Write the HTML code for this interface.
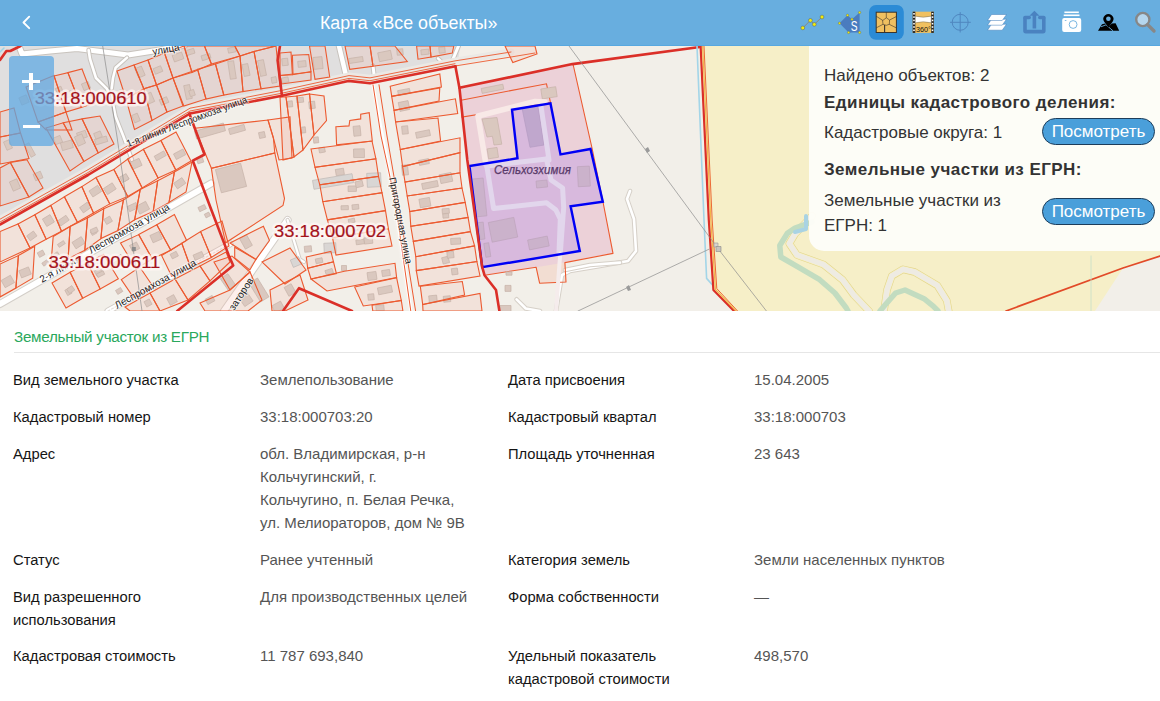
<!DOCTYPE html>
<html><head><meta charset="utf-8">
<style>
*{margin:0;padding:0;box-sizing:border-box}
html,body{width:1160px;height:701px;overflow:hidden;background:#fff;font-family:"Liberation Sans",sans-serif}
#hdr{position:absolute;left:0;top:0;width:1160px;height:46px;background:#68aedf;border-bottom:1px solid #57a8e0}
#title{position:absolute;left:320px;top:11.8px;font-size:17.8px;transform:scaleY(1.06);transform-origin:0 0;color:#fff;white-space:nowrap}
#map{position:absolute;left:0;top:46px;width:1160px;height:265px;overflow:hidden;background:#f2efe9}
#map svg{position:absolute;left:0;top:0}
#zoom{position:absolute;left:9px;top:56px;width:45px;height:90px;background:rgba(95,168,226,0.74);border-radius:4px}
#popup{position:absolute;left:809px;top:46px;width:351px;height:205px;background:rgba(253,253,248,0.97);border-bottom-left-radius:15px}
.pt{position:absolute;left:15px;font-size:17px;color:#333;white-space:nowrap}
.pb{font-weight:bold;letter-spacing:0.45px;color:#333}
.btn{position:absolute;left:233px;width:113px;height:27px;border-radius:14px;background:#4a9fda;border:1px solid #1d3d5a;color:#fff;font-size:17px;text-align:center;line-height:26px}
#info{position:absolute;left:0;top:311px;width:1160px;height:390px;background:#fff}
#etitle{position:absolute;left:14px;top:16.5px;font-size:15.2px;letter-spacing:-0.25px;color:#2aa85c;white-space:nowrap}
#divl{position:absolute;left:14px;top:41px;width:1146px;height:1px;background:#e6e6e6}
.l,.v{position:absolute;font-size:15px;line-height:22.7px;white-space:nowrap}
.l{color:#151515;font-size:14.75px !important}
.v{color:#555}
</style></head><body>
<div id="hdr">
<svg style="position:absolute;left:0;top:0" width="1160" height="46" viewBox="0 0 1160 46">
<path d="M29.2 16.7 L23.5 22.5 L29.2 28.2" fill="none" stroke="#fff" stroke-width="1.9" stroke-linecap="round" stroke-linejoin="round"/>
<!-- icon1 polyline -->
<polyline points="802.8,27.9 810.4,20.4 814.3,24.4 822,17" fill="none" stroke="#8a8a80" stroke-width="1"/>
<g fill="#f3ec0a" stroke="#4a5a7a" stroke-width="0.5">
<circle cx="802.8" cy="27.9" r="1.9"/><circle cx="810.4" cy="20.4" r="1.9"/><circle cx="814.3" cy="24.4" r="1.9"/><circle cx="822" cy="17" r="1.9"/>
</g>
<!-- icon2 polygon S -->
<polygon points="859.6,12.5 852,19.2 847.5,15.3 839.5,23.2 848.6,32.5 859.6,32.5" fill="#4a7cbf"/>
<text x="850.8" y="31" font-family="Liberation Sans" font-size="14" fill="#fff" textLength="6.8" lengthAdjust="spacingAndGlyphs">S</text>
<g fill="#f3ec0a" stroke="#4a5a7a" stroke-width="0.4">
<circle cx="859.6" cy="12.5" r="1.2"/><circle cx="847.5" cy="15.3" r="1.2"/><circle cx="852" cy="19.2" r="1.2"/><circle cx="839.5" cy="23.2" r="1.2"/><circle cx="848.6" cy="32.5" r="1.2"/><circle cx="859.6" cy="32.5" r="1.2"/>
</g>
<!-- icon3 selected chip -->
<rect x="869" y="4.9" width="34.8" height="34.9" rx="7" fill="#2b8bd6"/>
<rect x="876.2" y="12.2" width="20.2" height="20.3" fill="#f0c060" stroke="#3a342c" stroke-width="1"/>
<g stroke="#3a342c" stroke-width="0.6" fill="none">
<path d="M886.3 12.2 V17.8 M876.2 16.2 L883 20.6 M896.4 16.5 L889.6 20 M876.2 27.9 L883 24.3 M896.4 27.9 L889.2 24.3"/>
<path d="M886.3 17.8 L889.6 20 L889.3 24.3 L886.3 25.3 L883 24.3 L882.6 20.6 Z"/>
</g>
<path d="M884.6 25 V32.5" stroke="#3a342c" stroke-width="1.1"/>
<!-- icon4 filmstrip -->
<rect x="912.7" y="11.7" width="21.1" height="21.2" fill="#f0c060"/>
<rect x="912.7" y="11.7" width="2.6" height="21.2" fill="#222"/>
<rect x="931.2" y="11.7" width="2.6" height="21.2" fill="#222"/>
<g fill="#fff"><rect x="913.2" y="13" width="1.6" height="1.6"/><rect x="913.2" y="16.3" width="1.6" height="1.6"/><rect x="913.2" y="19.6" width="1.6" height="1.6"/><rect x="913.2" y="22.9" width="1.6" height="1.6"/><rect x="913.2" y="26.2" width="1.6" height="1.6"/><rect x="913.2" y="29.5" width="1.6" height="1.6"/>
<rect x="931.7" y="13" width="1.6" height="1.6"/><rect x="931.7" y="16.3" width="1.6" height="1.6"/><rect x="931.7" y="19.6" width="1.6" height="1.6"/><rect x="931.7" y="22.9" width="1.6" height="1.6"/><rect x="931.7" y="26.2" width="1.6" height="1.6"/><rect x="931.7" y="29.5" width="1.6" height="1.6"/></g>
<path d="M915.3 16.2 Q923.2 18.2 931.2 16.2 V22.8 Q923.2 20.8 915.3 22.8 Z" fill="#fff" stroke="#555" stroke-width="0.4"/>
<text x="916" y="31.8" font-family="Liberation Sans" font-size="7.2" fill="#111" textLength="15" lengthAdjust="spacingAndGlyphs">360°</text>
<!-- icon5 crosshair -->
<g stroke="#4f86bf" stroke-width="1" fill="none"><circle cx="960.2" cy="22.3" r="8"/><path d="M950 22.3 H970.8 M960.2 12.1 V32.5"/></g>
<!-- icon6 layers -->
<g fill="#fff" stroke="#3f7ab8" stroke-width="0.5">
<polygon points="987.5,30.2 1002.2,30.2 1006.5,24.2 991.5,24.2"/>
<polygon points="987.5,25.2 1002.2,25.2 1006.5,19.2 991.5,19.2"/>
<polygon points="987.5,20.5 1002.2,20.5 1006.5,14.5 991.5,14.5"/>
</g>
<!-- icon7 share -->
<path d="M1025 17.5 V30.8 Q1025 31.6 1025.8 31.6 H1043 Q1043.8 31.6 1043.8 30.8 V17.5" fill="none" stroke="#4a82c0" stroke-width="3.6" stroke-linejoin="round"/>
<path d="M1025 17.5 H1029.2 M1039.8 17.5 H1043.8" stroke="#4a82c0" stroke-width="3.6" stroke-linecap="round"/>
<rect x="1032.6" y="14.5" width="3.6" height="14" fill="#4a82c0"/>
<polygon points="1029.4,15.8 1034.4,10.8 1039.5,15.8" fill="#4a82c0"/>
<!-- icon8 camera -->
<rect x="1062.2" y="18.1" width="19" height="14" rx="2" fill="#fff"/>
<rect x="1064.4" y="11.5" width="14.4" height="1.6" fill="#fff"/>
<rect x="1063.7" y="14.5" width="15.8" height="1.6" fill="#fff"/>
<circle cx="1073.1" cy="24.5" r="3.9" fill="#fff" stroke="#6aaede" stroke-width="0.9"/>
<rect x="1064.8" y="20.2" width="1.6" height="0.8" fill="#6aaede"/>
<!-- icon9 map pin -->
<path d="M1098 30.8 L1102 24.2 L1105 23.6 L1108.4 27 L1111.8 23.6 L1115.6 23.2 L1119.2 30.8 Z" fill="#000"/>
<path d="M1101 26.8 L1106 24.8 L1113 30.8" fill="none" stroke="#6aaede" stroke-width="0.9"/>
<path d="M1108.4 27.5 L1104.2 21.8 A5 5 0 1 1 1112.6 21.8 Z" fill="#000"/>
<circle cx="1108.4" cy="18.7" r="2.3" fill="#6aaede"/>
<!-- icon10 search -->
<circle cx="1142.8" cy="19.5" r="6.6" fill="#b5d6ee" stroke="#878787" stroke-width="2.4"/>
<path d="M1147.6 24.6 L1154 31" stroke="#878787" stroke-width="3.4" stroke-linecap="round"/>
</svg>
<div id="title">Карта «Все объекты»</div>
</div>
<div id="map">
<svg width="1160" height="265" viewBox="0 46 1160 265">
<!-- MAP -->
<rect x="0" y="46" width="1160" height="265" fill="#f2efe9"/>
<polygon points="0.0,46.0 460.0,46.0 458.0,64.0 390.0,77.0 349.0,79.0 282.0,93.0 190.0,112.0 0.0,220.0" fill="#e0dfdf" stroke="none" stroke-width="1" />
<polygon points="701.0,46.0 1160.0,46.0 1160.0,311.0 734.0,311.0 712.0,289.0 706.0,175.0" fill="#f6efc8" stroke="none" stroke-width="1" />
<polygon points="1095.0,311.0 1123.0,268.0 1160.0,256.0 1160.0,311.0" fill="#f2efe9" stroke="none" stroke-width="1" />
<polygon points="459.0,88.0 573.0,64.0 592.0,148.0 603.0,202.0 613.0,253.0 565.0,262.0 566.0,282.0 540.0,283.0 536.0,267.0 484.0,275.0 469.0,166.0" fill="#ecd1d8" stroke="none" stroke-width="1" />
<polygon points="536.1,267.2 564.9,262.6 566.0,282.0 539.6,283.2" fill="#f2ddd2" stroke="none" stroke-width="1" />
<polyline points="19.0,46.0 22.0,54.0 50.0,51.0 77.0,48.6 128.0,55.0 160.0,50.0 185.0,45.0" fill="none" stroke="#c8c3bd" stroke-width="7.0" stroke-linejoin="round" stroke-linecap="round" />
<polyline points="19.0,46.0 22.0,54.0 50.0,51.0 77.0,48.6 128.0,55.0 160.0,50.0 185.0,45.0" fill="none" stroke="#ffffff" stroke-width="5" stroke-linejoin="round" stroke-linecap="round" />
<polyline points="88.6,50.0 90.0,59.0 96.0,78.0 106.6,88.4 111.7,97.4 115.6,116.6 123.3,136.0 132.0,160.0" fill="none" stroke="#c8c3bd" stroke-width="4.6" stroke-linejoin="round" stroke-linecap="round" />
<polyline points="88.6,50.0 90.0,59.0 96.0,78.0 106.6,88.4 111.7,97.4 115.6,116.6 123.3,136.0 132.0,160.0" fill="none" stroke="#ffffff" stroke-width="2.6" stroke-linejoin="round" stroke-linecap="round" />
<polyline points="127.0,57.6 115.6,67.8 113.0,78.0 111.7,88.4" fill="none" stroke="#c8c3bd" stroke-width="4.6" stroke-linejoin="round" stroke-linecap="round" />
<polyline points="127.0,57.6 115.6,67.8 113.0,78.0 111.7,88.4" fill="none" stroke="#ffffff" stroke-width="2.6" stroke-linejoin="round" stroke-linecap="round" />
<polyline points="339.0,46.0 346.7,78.6" fill="none" stroke="#c8c3bd" stroke-width="6.5" stroke-linejoin="round" stroke-linecap="round" />
<polyline points="339.0,46.0 346.7,78.6" fill="none" stroke="#ffffff" stroke-width="4.5" stroke-linejoin="round" stroke-linecap="round" />
<polyline points="373.0,66.0 374.7,80.0" fill="none" stroke="#c8c3bd" stroke-width="5.0" stroke-linejoin="round" stroke-linecap="round" />
<polyline points="373.0,66.0 374.7,80.0" fill="none" stroke="#ffffff" stroke-width="3" stroke-linejoin="round" stroke-linecap="round" />
<polyline points="458.5,46.0 450.7,64.6" fill="none" stroke="#c8c3bd" stroke-width="5.0" stroke-linejoin="round" stroke-linecap="round" />
<polyline points="458.5,46.0 450.7,64.6" fill="none" stroke="#ffffff" stroke-width="3" stroke-linejoin="round" stroke-linecap="round" />
<polyline points="438.0,58.4 444.5,64.6" fill="none" stroke="#c8c3bd" stroke-width="4.5" stroke-linejoin="round" stroke-linecap="round" />
<polyline points="438.0,58.4 444.5,64.6" fill="none" stroke="#ffffff" stroke-width="2.5" stroke-linejoin="round" stroke-linecap="round" />
<polyline points="0.0,219.5 88.0,170.0 190.0,108.5 282.0,90.7 349.0,75.9 370.0,78.2 455.0,61.2 511.0,52.0" fill="none" stroke="#ebe9e5" stroke-width="7" stroke-linejoin="round" stroke-linecap="round" />
<polyline points="0.0,304.0 211.0,183.5" fill="none" stroke="#d3cec8" stroke-width="8.0" stroke-linejoin="round" stroke-linecap="round" />
<polyline points="0.0,304.0 211.0,183.5" fill="none" stroke="#ffffff" stroke-width="6" stroke-linejoin="round" stroke-linecap="round" />
<polyline points="108.0,311.0 150.0,288.0 230.0,244.0" fill="none" stroke="#d3cec8" stroke-width="7.0" stroke-linejoin="round" stroke-linecap="round" />
<polyline points="108.0,311.0 150.0,288.0 230.0,244.0" fill="none" stroke="#ffffff" stroke-width="5" stroke-linejoin="round" stroke-linecap="round" />
<polyline points="108.0,311.0 150.0,288.0 230.0,244.0" fill="none" stroke="#e6e1dc" stroke-width="1.2" stroke-linejoin="round" stroke-linecap="round" stroke-dasharray="2 2"/>
<polyline points="287.6,220.0 224.0,311.0" fill="none" stroke="#d3cec8" stroke-width="8.0" stroke-linejoin="round" stroke-linecap="round" />
<polyline points="287.6,220.0 224.0,311.0" fill="none" stroke="#ffffff" stroke-width="6" stroke-linejoin="round" stroke-linecap="round" />
<polyline points="287.6,220.0 299.7,259.4 304.0,262.0" fill="none" stroke="#d3cec8" stroke-width="4.2" stroke-linejoin="round" stroke-linecap="round" />
<polyline points="287.6,220.0 299.7,259.4 304.0,262.0" fill="none" stroke="#ffffff" stroke-width="2.2" stroke-linejoin="round" stroke-linecap="round" />
<polyline points="374.0,85.0 395.0,200.0 412.0,311.0" fill="none" stroke="#f4f1ec" stroke-width="8" stroke-linejoin="round" stroke-linecap="round" />
<polyline points="373.0,85.0 394.5,200.0 411.0,311.0" fill="none" stroke="#ffffff" stroke-width="3" stroke-linejoin="round" stroke-linecap="round" />
<polyline points="630.0,191.0 627.0,199.0 634.0,219.0 636.0,251.0 628.0,261.0 600.0,266.0 570.0,271.0 562.0,275.0 556.0,311.0" fill="none" stroke="#d6d0c8" stroke-width="4.6" stroke-linejoin="round" stroke-linecap="round" />
<polyline points="630.0,191.0 627.0,199.0 634.0,219.0 636.0,251.0 628.0,261.0 600.0,266.0 570.0,271.0 562.0,275.0 556.0,311.0" fill="none" stroke="#ffffff" stroke-width="2.6" stroke-linejoin="round" stroke-linecap="round" />
<polyline points="565.0,270.0 590.0,265.0 620.0,262.6" fill="none" stroke="#d6d0c8" stroke-width="4.6" stroke-linejoin="round" stroke-linecap="round" />
<polyline points="565.0,270.0 590.0,265.0 620.0,262.6" fill="none" stroke="#ffffff" stroke-width="2.6" stroke-linejoin="round" stroke-linecap="round" />
<polyline points="516.6,299.3 525.8,308.5 540.0,311.0" fill="none" stroke="#d6d0c8" stroke-width="4.6" stroke-linejoin="round" stroke-linecap="round" />
<polyline points="516.6,299.3 525.8,308.5 540.0,311.0" fill="none" stroke="#ffffff" stroke-width="2.6" stroke-linejoin="round" stroke-linecap="round" />
<polygon points="0.0,112.0 14.0,108.0 20.5,133.0 0.0,137.0" fill="rgba(247,174,158,0.2)" stroke="none" stroke-width="1" />
<polygon points="0.0,137.0 20.5,133.0 29.0,158.5 0.0,164.0" fill="rgba(247,174,158,0.2)" stroke="none" stroke-width="1" />
<polygon points="10.3,162.4 27.0,159.8 43.0,188.0 28.9,197.0" fill="rgba(247,174,158,0.2)" stroke="none" stroke-width="1" />
<polygon points="0.0,168.0 10.3,162.4 28.9,197.0 0.0,206.0" fill="rgba(247,174,158,0.2)" stroke="none" stroke-width="1" />
<polygon points="26.0,87.0 54.0,75.5 66.0,112.0 38.0,122.0" fill="rgba(247,174,158,0.2)" stroke="none" stroke-width="1" />
<polygon points="38.0,122.0 66.0,112.0 72.0,130.0 46.0,130.0" fill="rgba(247,174,158,0.2)" stroke="none" stroke-width="1" />
<polygon points="54.0,76.0 67.9,72.6 81.5,107.4 66.0,112.0" fill="rgba(247,174,158,0.2)" stroke="none" stroke-width="1" />
<polygon points="67.9,72.6 82.0,69.0 95.0,103.0 81.5,107.4" fill="rgba(247,174,158,0.2)" stroke="none" stroke-width="1" />
<polygon points="46.0,128.0 63.2,122.8 83.9,161.4 70.0,171.0" fill="rgba(247,174,158,0.2)" stroke="none" stroke-width="1" />
<polygon points="63.2,122.8 82.1,118.9 98.2,152.9 83.9,161.4" fill="rgba(247,174,158,0.2)" stroke="none" stroke-width="1" />
<polygon points="82.1,118.9 100.0,116.0 114.0,144.0 98.2,152.9" fill="rgba(247,174,158,0.2)" stroke="none" stroke-width="1" />
<polygon points="117.0,71.0 134.0,65.0 143.8,88.8 126.0,99.0" fill="rgba(247,174,158,0.2)" stroke="none" stroke-width="1" />
<polygon points="126.0,99.0 143.8,88.8 152.0,120.5 134.5,129.5" fill="rgba(247,174,158,0.2)" stroke="none" stroke-width="1" />
<polygon points="134.0,65.0 148.0,60.0 156.5,85.0 143.8,88.8" fill="rgba(247,174,158,0.2)" stroke="none" stroke-width="1" />
<polygon points="148.0,60.0 164.5,53.0 173.0,78.0 156.5,85.0" fill="rgba(247,174,158,0.2)" stroke="none" stroke-width="1" />
<polygon points="164.5,53.0 184.0,46.0 192.0,72.5 173.0,78.0" fill="rgba(247,174,158,0.2)" stroke="none" stroke-width="1" />
<polygon points="184.0,46.0 204.5,46.0 211.4,64.0 192.0,72.5" fill="rgba(247,174,158,0.2)" stroke="none" stroke-width="1" />
<polygon points="204.5,46.0 234.8,46.0 240.0,56.0 211.4,64.0" fill="rgba(247,174,158,0.2)" stroke="none" stroke-width="1" />
<polygon points="234.8,46.0 276.0,46.0 254.0,51.5 240.0,56.0" fill="rgba(247,174,158,0.2)" stroke="none" stroke-width="1" />
<polygon points="143.8,88.8 156.5,85.0 167.0,112.0 152.0,120.5" fill="rgba(247,174,158,0.2)" stroke="none" stroke-width="1" />
<polygon points="156.5,85.0 173.0,78.0 183.0,106.0 167.0,112.0" fill="rgba(247,174,158,0.2)" stroke="none" stroke-width="1" />
<polygon points="173.0,78.0 197.6,69.4 206.0,99.0 183.8,106.0" fill="rgba(247,174,158,0.2)" stroke="none" stroke-width="1" />
<polygon points="197.6,69.4 215.5,64.0 223.8,95.0 206.0,99.0" fill="rgba(247,174,158,0.2)" stroke="none" stroke-width="1" />
<polygon points="215.5,64.0 240.0,56.0 243.0,91.5 223.8,95.0" fill="rgba(247,174,158,0.2)" stroke="none" stroke-width="1" />
<polygon points="240.0,56.0 254.0,51.5 261.0,88.8 243.0,91.5" fill="rgba(247,174,158,0.2)" stroke="none" stroke-width="1" />
<polygon points="254.0,51.5 276.0,46.0 280.0,86.0 261.0,88.8" fill="rgba(247,174,158,0.2)" stroke="none" stroke-width="1" />
<polygon points="280.0,53.0 291.0,52.0 292.4,74.7 280.0,75.5" fill="rgba(247,174,158,0.2)" stroke="none" stroke-width="1" />
<polygon points="292.4,55.3 308.7,54.5 311.0,71.6 293.0,74.7" fill="rgba(247,174,158,0.2)" stroke="none" stroke-width="1" />
<polygon points="280.0,75.5 311.0,72.0 311.0,80.0 281.6,84.0" fill="rgba(247,174,158,0.2)" stroke="none" stroke-width="1" />
<polygon points="309.5,46.0 325.0,46.0 329.7,77.0 315.0,79.4" fill="rgba(247,174,158,0.2)" stroke="none" stroke-width="1" />
<polygon points="345.0,46.0 370.0,46.0 373.0,66.2 349.8,69.3" fill="rgba(247,174,158,0.2)" stroke="none" stroke-width="1" />
<polygon points="370.0,46.0 394.8,46.0 407.3,61.5 373.0,66.2" fill="rgba(247,174,158,0.2)" stroke="none" stroke-width="1" />
<polygon points="416.6,46.0 430.0,46.0 431.0,57.0 418.0,59.2" fill="rgba(247,174,158,0.2)" stroke="none" stroke-width="1" />
<polygon points="430.0,46.0 453.8,46.0 452.3,53.0 431.0,57.0" fill="rgba(247,174,158,0.2)" stroke="none" stroke-width="1" />
<polygon points="505.0,46.0 535.0,46.0 537.0,54.0 512.8,62.6" fill="rgba(247,174,158,0.2)" stroke="none" stroke-width="1" />
<polygon points="18.0,224.0 34.8,214.7 46.2,239.2 30.0,248.0" fill="rgba(247,174,158,0.2)" stroke="none" stroke-width="1" />
<polygon points="34.8,214.7 50.8,205.4 61.5,231.2 46.2,239.2" fill="rgba(247,174,158,0.2)" stroke="none" stroke-width="1" />
<polygon points="50.8,205.4 64.4,196.7 77.4,222.2 61.5,231.2" fill="rgba(247,174,158,0.2)" stroke="none" stroke-width="1" />
<polygon points="64.4,196.7 81.9,186.6 93.5,213.0 77.4,222.2" fill="rgba(247,174,158,0.2)" stroke="none" stroke-width="1" />
<polygon points="81.9,186.6 96.0,177.6 109.8,203.9 93.5,213.0" fill="rgba(247,174,158,0.2)" stroke="none" stroke-width="1" />
<polygon points="96.0,177.6 113.9,169.4 127.7,196.5 109.8,203.9" fill="rgba(247,174,158,0.2)" stroke="none" stroke-width="1" />
<polygon points="113.9,169.4 127.7,159.0 142.2,188.0 127.7,196.5" fill="rgba(247,174,158,0.2)" stroke="none" stroke-width="1" />
<polygon points="127.7,159.0 143.4,149.3 158.1,178.1 142.2,188.0" fill="rgba(247,174,158,0.2)" stroke="none" stroke-width="1" />
<polygon points="143.4,149.3 160.9,140.4 175.8,170.0 158.1,178.1" fill="rgba(247,174,158,0.2)" stroke="none" stroke-width="1" />
<polygon points="160.9,140.4 176.0,132.0 191.0,161.0 175.8,170.0" fill="rgba(247,174,158,0.2)" stroke="none" stroke-width="1" />
<polygon points="0.0,264.0 18.4,255.6 15.9,288.1 0.0,297.0" fill="rgba(247,174,158,0.2)" stroke="none" stroke-width="1" />
<polygon points="18.4,255.6 34.7,246.2 32.7,278.2 15.9,288.1" fill="rgba(247,174,158,0.2)" stroke="none" stroke-width="1" />
<polygon points="53.2,236.4 70.1,226.6 68.1,258.8 50.7,267.7" fill="rgba(247,174,158,0.2)" stroke="none" stroke-width="1" />
<polygon points="70.1,226.6 87.5,217.9 84.8,250.3 68.1,258.8" fill="rgba(247,174,158,0.2)" stroke="none" stroke-width="1" />
<polygon points="87.5,217.9 103.7,208.7 100.9,238.6 84.8,250.3" fill="rgba(247,174,158,0.2)" stroke="none" stroke-width="1" />
<polygon points="103.7,208.7 123.4,200.0 117.9,230.6 100.9,238.6" fill="rgba(247,174,158,0.2)" stroke="none" stroke-width="1" />
<polygon points="123.4,200.0 140.2,189.6 134.6,219.8 117.9,230.6" fill="rgba(247,174,158,0.2)" stroke="none" stroke-width="1" />
<polygon points="140.2,189.6 157.7,180.7 153.2,211.5 134.6,219.8" fill="rgba(247,174,158,0.2)" stroke="none" stroke-width="1" />
<polygon points="157.7,180.7 174.4,172.1 169.0,202.5 153.2,211.5" fill="rgba(247,174,158,0.2)" stroke="none" stroke-width="1" />
<polygon points="174.4,172.1 192.0,162.0 186.0,192.0 169.0,202.5" fill="rgba(247,174,158,0.2)" stroke="none" stroke-width="1" />
<polygon points="0.0,231.5 18.0,224.0 30.0,248.0 0.0,262.0" fill="rgba(247,174,158,0.2)" stroke="none" stroke-width="1" />
<polygon points="52.0,283.0 70.1,272.2 82.7,298.3 66.0,308.0" fill="rgba(247,174,158,0.2)" stroke="none" stroke-width="1" />
<polygon points="70.1,272.2 87.4,262.7 100.2,289.0 82.7,298.3" fill="rgba(247,174,158,0.2)" stroke="none" stroke-width="1" />
<polygon points="87.4,262.7 103.6,254.4 118.3,278.7 100.2,289.0" fill="rgba(247,174,158,0.2)" stroke="none" stroke-width="1" />
<polygon points="120.5,243.0 138.7,234.6 152.2,258.8 136.2,269.0" fill="rgba(247,174,158,0.2)" stroke="none" stroke-width="1" />
<polygon points="138.7,234.6 156.8,224.8 170.8,250.3 152.2,258.8" fill="rgba(247,174,158,0.2)" stroke="none" stroke-width="1" />
<polygon points="156.8,224.8 174.4,214.5 186.6,240.4 170.8,250.3" fill="rgba(247,174,158,0.2)" stroke="none" stroke-width="1" />
<polygon points="121.3,279.6 139.7,267.0 153.7,287.5 133.7,297.8" fill="rgba(247,174,158,0.2)" stroke="none" stroke-width="1" />
<polygon points="161.6,255.5 181.8,243.3 190.6,267.5 171.7,276.2" fill="rgba(247,174,158,0.2)" stroke="none" stroke-width="1" />
<polygon points="181.8,243.3 200.6,231.6 211.3,257.4 190.6,267.5" fill="rgba(247,174,158,0.2)" stroke="none" stroke-width="1" />
<polygon points="200.6,231.6 222.0,221.0 229.0,246.0 211.3,257.4" fill="rgba(247,174,158,0.2)" stroke="none" stroke-width="1" />
<polygon points="125.0,307.0 150.0,293.0 160.0,311.0 130.0,311.0" fill="rgba(247,174,158,0.2)" stroke="none" stroke-width="1" />
<polygon points="150.0,293.0 175.0,279.0 188.0,300.0 160.0,311.0" fill="rgba(247,174,158,0.2)" stroke="none" stroke-width="1" />
<polygon points="175.0,279.0 200.0,266.0 210.0,281.0 188.0,300.0" fill="rgba(247,174,158,0.2)" stroke="none" stroke-width="1" />
<polygon points="200.0,266.0 226.0,252.0 230.0,262.0 210.0,281.0" fill="rgba(247,174,158,0.2)" stroke="none" stroke-width="1" />
<polygon points="214.0,262.0 232.0,256.0 250.0,272.0 230.0,290.0" fill="rgba(247,174,158,0.2)" stroke="none" stroke-width="1" />
<polygon points="200.0,303.0 230.0,290.0 250.0,272.0 262.0,300.0 248.0,311.0 205.0,311.0" fill="rgba(247,174,158,0.2)" stroke="none" stroke-width="1" />
<polygon points="194.8,128.3 268.0,120.0 273.4,138.0 274.8,153.0 211.4,168.3" fill="rgba(247,174,158,0.2)" stroke="none" stroke-width="1" />
<polygon points="211.4,168.3 274.8,153.0 284.5,198.6 283.0,205.5 225.6,242.8 216.0,200.0" fill="rgba(247,174,158,0.2)" stroke="none" stroke-width="1" />
<polygon points="268.0,120.0 290.0,117.0 292.0,158.0 279.0,160.0 273.4,138.0" fill="rgba(247,174,158,0.2)" stroke="none" stroke-width="1" />
<polygon points="280.0,97.0 286.0,97.0 294.0,157.0 283.0,160.0" fill="rgba(247,174,158,0.2)" stroke="none" stroke-width="1" />
<polygon points="286.0,97.0 297.0,96.0 303.0,150.0 294.0,157.0" fill="rgba(247,174,158,0.2)" stroke="none" stroke-width="1" />
<polygon points="297.0,96.0 309.5,94.0 314.0,135.0 303.0,150.0" fill="rgba(247,174,158,0.2)" stroke="none" stroke-width="1" />
<polygon points="309.5,94.0 324.0,96.0 326.5,120.5 314.0,135.0" fill="rgba(247,174,158,0.2)" stroke="none" stroke-width="1" />
<polygon points="335.9,126.7 349.0,125.9 349.8,120.5 360.7,118.9 360.7,114.3 369.2,112.7 372.3,141.0 336.6,144.8" fill="rgba(247,174,158,0.2)" stroke="none" stroke-width="1" />
<polygon points="311.0,149.0 372.0,141.0 375.9,158.8 315.0,167.3" fill="rgba(247,174,158,0.2)" stroke="none" stroke-width="1" />
<polygon points="315.0,167.3 375.9,158.8 378.5,176.4 319.8,184.8" fill="rgba(247,174,158,0.2)" stroke="none" stroke-width="1" />
<polygon points="319.8,184.8 378.5,176.4 382.0,192.7 322.8,201.7" fill="rgba(247,174,158,0.2)" stroke="none" stroke-width="1" />
<polygon points="322.8,201.7 382.0,192.7 385.5,210.6 327.4,219.9" fill="rgba(247,174,158,0.2)" stroke="none" stroke-width="1" />
<polygon points="327.4,219.9 385.5,210.6 388.4,228.8 332.5,237.6" fill="rgba(247,174,158,0.2)" stroke="none" stroke-width="1" />
<polygon points="332.5,237.6 388.4,228.8 392.0,246.0 336.0,255.0" fill="rgba(247,174,158,0.2)" stroke="none" stroke-width="1" />
<polygon points="306.3,257.0 330.9,251.4 333.5,261.8 307.7,268.3" fill="rgba(247,174,158,0.2)" stroke="none" stroke-width="1" />
<polygon points="307.7,268.3 333.5,261.8 336.4,273.6 311.0,279.0" fill="rgba(247,174,158,0.2)" stroke="none" stroke-width="1" />
<polygon points="311.0,279.0 344.3,271.2 395.0,263.3 396.6,277.6 347.5,287.0 327.0,291.0" fill="rgba(247,174,158,0.2)" stroke="none" stroke-width="1" />
<polygon points="354.6,287.0 396.6,277.6 401.3,300.5 363.3,306.0" fill="rgba(247,174,158,0.2)" stroke="none" stroke-width="1" />
<polygon points="372.0,305.3 401.3,300.5 402.9,311.0 372.8,311.0" fill="rgba(247,174,158,0.2)" stroke="none" stroke-width="1" />
<polygon points="230.0,243.0 263.4,226.2 269.5,240.5 255.9,259.4" fill="rgba(247,174,158,0.2)" stroke="none" stroke-width="1" />
<polygon points="234.7,247.3 255.9,259.4 249.8,270.0 234.7,258.0" fill="rgba(247,174,158,0.2)" stroke="none" stroke-width="1" />
<polygon points="262.0,262.0 290.0,248.0 306.0,270.0 285.0,284.0" fill="rgba(247,174,158,0.2)" stroke="none" stroke-width="1" />
<polygon points="270.0,290.0 300.0,275.0 308.0,300.0 285.0,311.0 272.0,311.0" fill="rgba(247,174,158,0.2)" stroke="none" stroke-width="1" />
<polygon points="390.2,86.3 439.8,73.9 441.4,87.1 391.7,96.4" fill="rgba(247,174,158,0.2)" stroke="none" stroke-width="1" />
<polygon points="391.7,96.4 439.8,87.9 439.0,101.0 394.0,110.4" fill="rgba(247,174,158,0.2)" stroke="none" stroke-width="1" />
<polygon points="394.0,110.4 455.4,98.8 457.7,113.5 395.6,122.0" fill="rgba(247,174,158,0.2)" stroke="none" stroke-width="1" />
<polygon points="395.6,122.0 438.0,118.0 440.6,141.0 400.3,149.5" fill="rgba(247,174,158,0.2)" stroke="none" stroke-width="1" />
<polygon points="400.3,149.5 460.0,137.8 460.0,152.6 402.6,166.6" fill="rgba(247,174,158,0.2)" stroke="none" stroke-width="1" />
<polygon points="402.6,166.6 460.0,152.6 460.0,172.8 405.0,182.0" fill="rgba(247,174,158,0.2)" stroke="none" stroke-width="1" />
<polygon points="405.0,182.0 460.0,172.8 462.0,188.0 407.2,196.0" fill="rgba(247,174,158,0.2)" stroke="none" stroke-width="1" />
<polygon points="407.2,196.0 462.0,188.0 465.2,202.4 409.8,211.5" fill="rgba(247,174,158,0.2)" stroke="none" stroke-width="1" />
<polygon points="409.8,211.5 465.2,202.4 468.1,217.5 410.8,226.3" fill="rgba(247,174,158,0.2)" stroke="none" stroke-width="1" />
<polygon points="410.8,226.3 468.1,217.5 470.5,231.6 413.3,241.4" fill="rgba(247,174,158,0.2)" stroke="none" stroke-width="1" />
<polygon points="413.3,241.4 470.5,231.6 474.6,245.9 415.8,256.7" fill="rgba(247,174,158,0.2)" stroke="none" stroke-width="1" />
<polygon points="415.8,256.7 474.6,245.9 476.9,261.5 416.3,270.6" fill="rgba(247,174,158,0.2)" stroke="none" stroke-width="1" />
<polygon points="416.3,270.6 476.9,261.5 480.0,276.0 419.0,286.0" fill="rgba(247,174,158,0.2)" stroke="none" stroke-width="1" />
<polygon points="420.3,286.3 462.3,281.5 464.6,295.0 422.7,304.5" fill="rgba(247,174,158,0.2)" stroke="none" stroke-width="1" />
<polygon points="422.7,304.5 480.0,293.4 482.0,311.0 423.0,311.0" fill="rgba(247,174,158,0.2)" stroke="none" stroke-width="1" />
<polygon points="62.3,93.3 72.8,90.2 74.3,95.3 63.8,98.4" fill="#dac8bf" stroke="#c6b2a8" stroke-width="0.7" />
<polygon points="75.1,94.7 86.6,92.1 88.3,99.9 76.8,102.4" fill="#dac8bf" stroke="#c6b2a8" stroke-width="0.7" />
<polygon points="60.4,143.0 71.3,140.0 73.4,147.5 62.5,150.6" fill="#dac8bf" stroke="#c6b2a8" stroke-width="0.7" />
<polygon points="76.5,133.2 85.1,130.3 87.4,136.9 78.7,139.8" fill="#dac8bf" stroke="#c6b2a8" stroke-width="0.7" />
<polygon points="94.4,139.5 106.2,136.0 107.8,141.4 96.0,144.9" fill="#dac8bf" stroke="#c6b2a8" stroke-width="0.7" />
<polygon points="134.8,68.8 141.3,66.0 145.2,75.2 138.7,78.0" fill="#dac8bf" stroke="#c6b2a8" stroke-width="0.7" />
<polygon points="153.1,68.8 160.5,65.7 162.9,71.2 155.5,74.3" fill="#dac8bf" stroke="#c6b2a8" stroke-width="0.7" />
<polygon points="172.1,55.4 181.5,52.0 183.9,58.6 174.5,62.0" fill="#dac8bf" stroke="#c6b2a8" stroke-width="0.7" />
<polygon points="185.0,50.9 193.6,48.3 195.0,53.1 186.4,55.7" fill="#dac8bf" stroke="#c6b2a8" stroke-width="0.7" />
<polygon points="145.3,94.6 150.8,92.2 154.7,101.4 149.2,103.8" fill="#dac8bf" stroke="#c6b2a8" stroke-width="0.7" />
<polygon points="159.1,99.8 166.5,96.7 168.9,102.2 161.5,105.3" fill="#dac8bf" stroke="#c6b2a8" stroke-width="0.7" />
<polygon points="183.7,85.7 189.5,84.5 192.3,98.3 186.5,99.5" fill="#dac8bf" stroke="#c6b2a8" stroke-width="0.7" />
<polygon points="188.7,90.9 193.5,89.4 195.3,95.1 190.5,96.6" fill="#dac8bf" stroke="#c6b2a8" stroke-width="0.7" />
<polygon points="227.7,61.5 233.6,60.7 236.3,78.5 230.4,79.3" fill="#dac8bf" stroke="#c6b2a8" stroke-width="0.7" />
<polygon points="241.9,64.7 247.7,63.5 250.1,75.3 244.3,76.5" fill="#dac8bf" stroke="#c6b2a8" stroke-width="0.7" />
<polygon points="257.5,60.8 263.4,59.6 266.5,75.2 260.6,76.4" fill="#dac8bf" stroke="#c6b2a8" stroke-width="0.7" />
<polygon points="271.0,77.6 275.9,76.6 277.0,82.4 272.1,83.4" fill="#dac8bf" stroke="#c6b2a8" stroke-width="0.7" />
<polygon points="201.0,55.9 209.6,53.3 211.0,58.1 202.4,60.7" fill="#dac8bf" stroke="#c6b2a8" stroke-width="0.7" />
<polygon points="227.6,48.3 235.4,46.8 236.4,51.7 228.6,53.2" fill="#dac8bf" stroke="#c6b2a8" stroke-width="0.7" />
<polygon points="117.5,91.0 123.0,88.7 126.5,97.0 121.0,99.3" fill="#dac8bf" stroke="#c6b2a8" stroke-width="0.7" />
<polygon points="131.7,115.5 137.2,113.1 140.3,120.5 134.8,122.9" fill="#dac8bf" stroke="#c6b2a8" stroke-width="0.7" />
<polygon points="55.3,88.6 60.8,86.2 64.7,95.4 59.2,97.8" fill="#dac8bf" stroke="#c6b2a8" stroke-width="0.7" />
<polygon points="81.4,84.1 87.9,81.4 90.6,87.9 84.1,90.6" fill="#dac8bf" stroke="#c6b2a8" stroke-width="0.7" />
<polygon points="18.8,97.9 26.1,94.8 29.2,102.1 21.9,105.2" fill="#dac8bf" stroke="#c6b2a8" stroke-width="0.7" />
<polygon points="24.5,145.1 28.8,142.7 35.5,154.9 31.2,157.3" fill="#dac8bf" stroke="#c6b2a8" stroke-width="0.7" />
<polygon points="33.0,174.3 40.3,171.2 43.0,177.7 35.7,180.8" fill="#dac8bf" stroke="#c6b2a8" stroke-width="0.7" />
<polygon points="53.4,138.1 59.9,135.4 62.6,141.9 56.1,144.6" fill="#dac8bf" stroke="#c6b2a8" stroke-width="0.7" />
<polygon points="74.4,137.0 81.7,133.8 85.6,143.0 78.3,146.2" fill="#dac8bf" stroke="#c6b2a8" stroke-width="0.7" />
<polygon points="93.6,133.6 100.1,130.9 102.4,136.4 95.9,139.1" fill="#dac8bf" stroke="#c6b2a8" stroke-width="0.7" />
<polygon points="9.4,182.0 16.7,178.8 20.6,188.0 13.3,191.2" fill="#dac8bf" stroke="#c6b2a8" stroke-width="0.7" />
<polygon points="3.5,142.0 9.0,139.7 12.5,148.0 7.0,150.3" fill="#dac8bf" stroke="#c6b2a8" stroke-width="0.7" />
<polygon points="281.7,58.8 287.6,58.2 288.3,65.2 282.4,65.8" fill="#dac8bf" stroke="#c6b2a8" stroke-width="0.7" />
<polygon points="297.7,61.4 305.7,60.6 306.3,66.6 298.3,67.4" fill="#dac8bf" stroke="#c6b2a8" stroke-width="0.7" />
<polygon points="281.1,78.2 287.9,76.9 288.9,81.8 282.1,83.1" fill="#dac8bf" stroke="#c6b2a8" stroke-width="0.7" />
<polygon points="312.9,57.5 321.9,56.6 323.1,68.5 314.1,69.4" fill="#dac8bf" stroke="#c6b2a8" stroke-width="0.7" />
<polygon points="348.7,58.6 362.5,56.5 363.3,61.4 349.5,63.5" fill="#dac8bf" stroke="#c6b2a8" stroke-width="0.7" />
<polygon points="377.7,52.9 390.5,50.3 392.3,59.1 379.5,61.7" fill="#dac8bf" stroke="#c6b2a8" stroke-width="0.7" />
<polygon points="396.7,49.3 402.7,48.7 403.3,54.7 397.3,55.3" fill="#dac8bf" stroke="#c6b2a8" stroke-width="0.7" />
<polygon points="420.8,49.9 428.7,49.1 429.2,54.1 421.3,54.9" fill="#dac8bf" stroke="#c6b2a8" stroke-width="0.7" />
<polygon points="438.7,47.3 444.7,46.7 445.3,52.7 439.3,53.3" fill="#dac8bf" stroke="#c6b2a8" stroke-width="0.7" />
<polygon points="26.7,235.9 33.4,231.0 37.0,235.9 30.3,240.8" fill="#dac8bf" stroke="#c6b2a8" stroke-width="0.7" />
<polygon points="42.4,219.1 50.0,214.6 54.4,222.0 46.8,226.5" fill="#dac8bf" stroke="#c6b2a8" stroke-width="0.7" />
<polygon points="57.4,221.1 65.9,215.3 69.2,220.1 60.7,226.0" fill="#dac8bf" stroke="#c6b2a8" stroke-width="0.7" />
<polygon points="79.6,207.6 87.3,202.1 91.1,207.4 83.4,212.9" fill="#dac8bf" stroke="#c6b2a8" stroke-width="0.7" />
<polygon points="89.0,191.0 97.6,185.3 101.6,191.4 92.9,197.0" fill="#dac8bf" stroke="#c6b2a8" stroke-width="0.7" />
<polygon points="103.5,188.5 112.2,182.8 116.2,188.9 107.5,194.6" fill="#dac8bf" stroke="#c6b2a8" stroke-width="0.7" />
<polygon points="122.7,178.3 127.0,175.6 129.1,178.9 124.8,181.6" fill="#dac8bf" stroke="#c6b2a8" stroke-width="0.7" />
<polygon points="119.6,177.1 126.1,173.6 129.0,179.0 122.5,182.5" fill="#dac8bf" stroke="#c6b2a8" stroke-width="0.7" />
<polygon points="129.3,162.6 139.0,158.3 142.1,165.3 132.4,169.6" fill="#dac8bf" stroke="#c6b2a8" stroke-width="0.7" />
<polygon points="154.2,156.3 163.7,150.9 166.3,155.4 156.7,160.8" fill="#dac8bf" stroke="#c6b2a8" stroke-width="0.7" />
<polygon points="173.5,154.0 182.9,149.0 185.8,154.6 176.4,159.5" fill="#dac8bf" stroke="#c6b2a8" stroke-width="0.7" />
<polygon points="1.1,280.5 10.4,275.2 14.5,282.5 5.2,287.7" fill="#dac8bf" stroke="#c6b2a8" stroke-width="0.7" />
<polygon points="18.8,270.8 28.4,266.9 31.3,274.1 21.6,277.9" fill="#dac8bf" stroke="#c6b2a8" stroke-width="0.7" />
<polygon points="37.2,252.9 42.6,250.0 45.0,254.5 39.6,257.4" fill="#dac8bf" stroke="#c6b2a8" stroke-width="0.7" />
<polygon points="41.8,263.2 46.9,259.7 48.9,262.7 43.8,266.2" fill="#dac8bf" stroke="#c6b2a8" stroke-width="0.7" />
<polygon points="57.4,244.5 63.4,240.6 65.3,243.5 59.3,247.4" fill="#dac8bf" stroke="#c6b2a8" stroke-width="0.7" />
<polygon points="52.7,254.8 57.3,251.7 59.4,254.8 54.8,257.9" fill="#dac8bf" stroke="#c6b2a8" stroke-width="0.7" />
<polygon points="72.0,242.4 81.2,236.6 85.2,243.0 76.0,248.8" fill="#dac8bf" stroke="#c6b2a8" stroke-width="0.7" />
<polygon points="90.3,231.9 95.0,229.2 97.1,232.8 92.4,235.5" fill="#dac8bf" stroke="#c6b2a8" stroke-width="0.7" />
<polygon points="90.1,229.9 96.5,227.0 98.3,231.2 91.9,234.0" fill="#dac8bf" stroke="#c6b2a8" stroke-width="0.7" />
<polygon points="103.8,219.4 109.6,216.1 112.5,221.2 106.7,224.5" fill="#dac8bf" stroke="#c6b2a8" stroke-width="0.7" />
<polygon points="127.3,206.5 136.0,202.5 138.4,207.7 129.7,211.7" fill="#dac8bf" stroke="#c6b2a8" stroke-width="0.7" />
<polygon points="135.9,206.4 145.6,201.3 149.6,209.1 139.9,214.1" fill="#dac8bf" stroke="#c6b2a8" stroke-width="0.7" />
<polygon points="173.6,183.3 181.9,177.6 185.8,183.2 177.5,188.9" fill="#dac8bf" stroke="#c6b2a8" stroke-width="0.7" />
<polygon points="64.8,290.3 69.1,287.8 72.1,293.1 67.7,295.6" fill="#dac8bf" stroke="#c6b2a8" stroke-width="0.7" />
<polygon points="66.6,289.3 71.7,285.6 74.8,290.0 69.7,293.6" fill="#dac8bf" stroke="#c6b2a8" stroke-width="0.7" />
<polygon points="94.1,271.3 100.4,267.7 103.3,272.8 97.1,276.4" fill="#dac8bf" stroke="#c6b2a8" stroke-width="0.7" />
<polygon points="96.3,274.0 103.1,270.8 104.7,274.2 98.0,277.5" fill="#dac8bf" stroke="#c6b2a8" stroke-width="0.7" />
<polygon points="116.0,257.6 120.9,254.3 123.8,258.5 118.9,261.8" fill="#dac8bf" stroke="#c6b2a8" stroke-width="0.7" />
<polygon points="113.0,263.0 117.9,260.3 119.9,263.8 115.0,266.5" fill="#dac8bf" stroke="#c6b2a8" stroke-width="0.7" />
<polygon points="129.5,245.5 136.4,241.9 139.8,248.4 132.9,252.1" fill="#dac8bf" stroke="#c6b2a8" stroke-width="0.7" />
<polygon points="149.9,235.5 159.0,231.4 162.3,238.8 153.1,242.8" fill="#dac8bf" stroke="#c6b2a8" stroke-width="0.7" />
<polygon points="197.9,207.6 204.4,204.5 206.4,208.6 199.8,211.7" fill="#dac8bf" stroke="#c6b2a8" stroke-width="0.7" />
<polygon points="204.3,214.3 208.7,212.1 210.5,215.6 206.1,217.9" fill="#dac8bf" stroke="#c6b2a8" stroke-width="0.7" />
<polygon points="115.5,290.5 120.5,287.5 122.8,291.4 117.8,294.4" fill="#dac8bf" stroke="#c6b2a8" stroke-width="0.7" />
<polygon points="170.1,254.3 176.1,251.3 178.4,255.9 172.4,258.9" fill="#dac8bf" stroke="#c6b2a8" stroke-width="0.7" />
<polygon points="193.0,255.2 201.7,251.4 204.0,256.6 195.3,260.4" fill="#dac8bf" stroke="#c6b2a8" stroke-width="0.7" />
<polygon points="220.3,278.8 227.8,273.7 235.7,285.2 228.2,290.3" fill="#dac8bf" stroke="#c6b2a8" stroke-width="0.7" />
<polygon points="236.9,295.0 245.2,289.4 253.1,301.0 244.8,306.6" fill="#dac8bf" stroke="#c6b2a8" stroke-width="0.7" />
<polygon points="205.1,299.3 212.1,295.4 214.9,300.7 207.9,304.6" fill="#dac8bf" stroke="#c6b2a8" stroke-width="0.7" />
<polygon points="166.6,298.4 173.6,294.6 177.4,301.6 170.4,305.4" fill="#dac8bf" stroke="#c6b2a8" stroke-width="0.7" />
<polygon points="143.9,301.8 149.2,298.9 152.1,304.2 146.8,307.1" fill="#dac8bf" stroke="#c6b2a8" stroke-width="0.7" />
<polygon points="194.5,131.3 223.3,123.0 225.5,130.7 196.7,139.0" fill="#dac8bf" stroke="#c6b2a8" stroke-width="0.7" />
<polygon points="228.5,128.8 243.9,124.4 245.5,130.2 230.1,134.6" fill="#dac8bf" stroke="#c6b2a8" stroke-width="0.7" />
<polygon points="215.4,169.6 240.6,163.2 246.6,186.4 221.4,192.8" fill="#dac8bf" stroke="#c6b2a8" stroke-width="0.7" />
<polygon points="196.2,158.0 202.0,156.2 203.8,162.0 198.0,163.8" fill="#dac8bf" stroke="#c6b2a8" stroke-width="0.7" />
<polygon points="258.5,132.7 264.3,131.5 265.5,137.3 259.7,138.5" fill="#dac8bf" stroke="#c6b2a8" stroke-width="0.7" />
<polygon points="287.2,101.3 292.2,100.8 292.8,106.7 287.8,107.2" fill="#dac8bf" stroke="#c6b2a8" stroke-width="0.7" />
<polygon points="296.3,97.9 303.2,97.2 303.7,102.1 296.8,102.8" fill="#dac8bf" stroke="#c6b2a8" stroke-width="0.7" />
<polygon points="308.7,101.8 314.6,101.2 315.3,108.2 309.4,108.8" fill="#dac8bf" stroke="#c6b2a8" stroke-width="0.7" />
<polygon points="313.2,137.3 318.2,136.8 318.8,142.7 313.8,143.2" fill="#dac8bf" stroke="#c6b2a8" stroke-width="0.7" />
<polygon points="300.2,127.3 305.2,126.8 305.8,132.7 300.8,133.2" fill="#dac8bf" stroke="#c6b2a8" stroke-width="0.7" />
<polygon points="353.0,126.4 360.0,125.7 361.0,135.6 354.0,136.3" fill="#dac8bf" stroke="#c6b2a8" stroke-width="0.7" />
<polygon points="318.6,148.1 324.4,147.0 325.4,151.9 319.6,153.0" fill="#dac8bf" stroke="#c6b2a8" stroke-width="0.7" />
<polygon points="353.5,149.0 364.3,148.8 364.5,157.5 353.7,157.6" fill="#dac8bf" stroke="#c6b2a8" stroke-width="0.7" />
<polygon points="335.3,169.5 343.4,168.2 344.4,174.5 336.3,175.8" fill="#dac8bf" stroke="#c6b2a8" stroke-width="0.7" />
<polygon points="348.1,186.0 356.4,185.9 356.4,191.4 348.1,191.5" fill="#dac8bf" stroke="#c6b2a8" stroke-width="0.7" />
<polygon points="354.9,182.0 362.0,180.2 363.4,186.1 356.4,187.8" fill="#dac8bf" stroke="#c6b2a8" stroke-width="0.7" />
<polygon points="341.0,205.8 348.3,205.6 348.4,209.7 341.1,209.8" fill="#dac8bf" stroke="#c6b2a8" stroke-width="0.7" />
<polygon points="351.9,204.9 358.5,204.3 358.9,209.0 352.3,209.6" fill="#dac8bf" stroke="#c6b2a8" stroke-width="0.7" />
<polygon points="348.1,219.5 354.3,218.1 355.1,222.1 349.0,223.4" fill="#dac8bf" stroke="#c6b2a8" stroke-width="0.7" />
<polygon points="352.3,226.3 360.0,226.2 360.0,230.2 352.3,230.3" fill="#dac8bf" stroke="#c6b2a8" stroke-width="0.7" />
<polygon points="355.8,240.2 364.1,239.2 364.6,243.7 356.4,244.8" fill="#dac8bf" stroke="#c6b2a8" stroke-width="0.7" />
<polygon points="363.9,237.9 372.2,237.0 372.9,243.2 364.6,244.1" fill="#dac8bf" stroke="#c6b2a8" stroke-width="0.7" />
<polygon points="312.5,180.4 352.0,173.7 353.5,182.6 314.0,189.3" fill="#d9d6d4" stroke="#bdb8b5" stroke-width="0.7" />
<polygon points="366.7,173.4 380.6,172.7 381.3,186.6 367.4,187.3" fill="#d9d6d4" stroke="#bdb8b5" stroke-width="0.7" />
<polygon points="315.2,259.1 322.0,257.7 322.9,262.3 316.2,263.7" fill="#dac8bf" stroke="#c6b2a8" stroke-width="0.7" />
<polygon points="324.9,270.7 332.0,268.4 333.5,272.9 326.4,275.2" fill="#dac8bf" stroke="#c6b2a8" stroke-width="0.7" />
<polygon points="367.0,272.7 375.9,271.4 377.0,279.3 368.1,280.6" fill="#dac8bf" stroke="#c6b2a8" stroke-width="0.7" />
<polygon points="381.6,270.6 389.5,269.4 390.4,275.4 382.5,276.6" fill="#dac8bf" stroke="#c6b2a8" stroke-width="0.7" />
<polygon points="377.4,288.0 391.2,285.2 392.6,292.0 378.8,294.8" fill="#dac8bf" stroke="#c6b2a8" stroke-width="0.7" />
<polygon points="367.7,294.3 373.7,293.7 374.3,299.7 368.3,300.3" fill="#dac8bf" stroke="#c6b2a8" stroke-width="0.7" />
<polygon points="341.5,265.5 346.5,265.5 346.5,270.5 341.5,270.5" fill="#dac8bf" stroke="#c6b2a8" stroke-width="0.7" />
<polygon points="375.7,305.4 383.7,304.6 384.3,310.6 376.3,311.4" fill="#dac8bf" stroke="#c6b2a8" stroke-width="0.7" />
<polygon points="304.2,246.4 311.2,245.7 311.8,251.6 304.8,252.3" fill="#dac8bf" stroke="#c6b2a8" stroke-width="0.7" />
<polygon points="323.8,243.3 335.7,242.7 336.2,252.7 324.3,253.3" fill="#d9d6d4" stroke="#bdb8b5" stroke-width="0.7" />
<polygon points="239.6,238.7 246.6,234.8 252.4,245.3 245.4,249.2" fill="#dac8bf" stroke="#c6b2a8" stroke-width="0.7" />
<polygon points="249.0,283.2 257.5,278.0 269.0,296.8 260.5,302.0" fill="#dac8bf" stroke="#c6b2a8" stroke-width="0.7" />
<polygon points="290.3,260.1 298.6,256.6 301.7,263.9 293.4,267.4" fill="#d9d6d4" stroke="#bdb8b5" stroke-width="0.7" />
<polygon points="284.1,287.5 291.1,283.7 295.9,292.5 288.9,296.3" fill="#dac8bf" stroke="#c6b2a8" stroke-width="0.7" />
<polygon points="271.7,305.9 280.5,301.1 284.3,308.1 275.5,312.9" fill="#dac8bf" stroke="#c6b2a8" stroke-width="0.7" />
<polygon points="418.9,199.3 429.4,197.4 430.9,205.9 420.4,207.8" fill="#dac8bf" stroke="#c6b2a8" stroke-width="0.7" />
<polygon points="442.7,213.9 448.5,213.5 448.8,217.8 443.0,218.2" fill="#dac8bf" stroke="#c6b2a8" stroke-width="0.7" />
<polygon points="442.0,208.9 449.1,208.4 449.4,213.2 442.4,213.7" fill="#dac8bf" stroke="#c6b2a8" stroke-width="0.7" />
<polygon points="450.6,238.5 460.4,237.9 460.7,244.0 450.9,244.5" fill="#dac8bf" stroke="#c6b2a8" stroke-width="0.7" />
<polygon points="441.6,257.8 448.0,256.2 449.6,262.5 443.2,264.1" fill="#dac8bf" stroke="#c6b2a8" stroke-width="0.7" />
<polygon points="446.8,251.9 453.4,251.3 454.1,257.6 447.4,258.3" fill="#dac8bf" stroke="#c6b2a8" stroke-width="0.7" />
<polygon points="451.3,268.7 457.3,268.0 458.1,274.2 452.1,275.0" fill="#dac8bf" stroke="#c6b2a8" stroke-width="0.7" />
<polygon points="397.6,90.7 409.4,88.4 410.4,93.3 398.6,95.6" fill="#dac8bf" stroke="#c6b2a8" stroke-width="0.7" />
<polygon points="398.2,102.6 408.0,100.6 409.8,109.4 400.0,111.4" fill="#dac8bf" stroke="#c6b2a8" stroke-width="0.7" />
<polygon points="415.5,132.5 429.3,129.7 430.5,135.5 416.7,138.3" fill="#dac8bf" stroke="#c6b2a8" stroke-width="0.7" />
<polygon points="401.6,126.3 407.6,125.7 408.4,133.7 402.4,134.3" fill="#dac8bf" stroke="#c6b2a8" stroke-width="0.7" />
<polygon points="418.6,160.5 428.4,158.6 429.4,163.5 419.6,165.4" fill="#dac8bf" stroke="#c6b2a8" stroke-width="0.7" />
<polygon points="401.5,165.3 407.5,164.7 408.5,174.7 402.5,175.3" fill="#dac8bf" stroke="#c6b2a8" stroke-width="0.7" />
<polygon points="421.6,183.6 437.2,180.5 438.4,186.4 422.8,189.5" fill="#dac8bf" stroke="#c6b2a8" stroke-width="0.7" />
<polygon points="439.2,174.8 451.0,172.4 452.8,181.2 441.0,183.6" fill="#dac8bf" stroke="#c6b2a8" stroke-width="0.7" />
<polygon points="428.7,295.9 436.6,295.1 437.3,302.1 429.4,302.9" fill="#dac8bf" stroke="#c6b2a8" stroke-width="0.7" />
<polygon points="443.2,296.4 450.2,295.7 450.8,301.6 443.8,302.3" fill="#dac8bf" stroke="#c6b2a8" stroke-width="0.7" />
<polygon points="0.0,112.0 14.0,108.0 20.5,133.0 0.0,137.0" fill="none" stroke="#ec5a30" stroke-width="1.1" />
<polygon points="0.0,137.0 20.5,133.0 29.0,158.5 0.0,164.0" fill="none" stroke="#ec5a30" stroke-width="1.1" />
<polygon points="10.3,162.4 27.0,159.8 43.0,188.0 28.9,197.0" fill="none" stroke="#ec5a30" stroke-width="1.1" />
<polygon points="0.0,168.0 10.3,162.4 28.9,197.0 0.0,206.0" fill="none" stroke="#ec5a30" stroke-width="1.1" />
<polygon points="26.0,87.0 54.0,75.5 66.0,112.0 38.0,122.0" fill="none" stroke="#ec5a30" stroke-width="1.1" />
<polygon points="38.0,122.0 66.0,112.0 72.0,130.0 46.0,130.0" fill="none" stroke="#ec5a30" stroke-width="1.1" />
<polygon points="54.0,76.0 67.9,72.6 81.5,107.4 66.0,112.0" fill="none" stroke="#ec5a30" stroke-width="1.1" />
<polygon points="67.9,72.6 82.0,69.0 95.0,103.0 81.5,107.4" fill="none" stroke="#ec5a30" stroke-width="1.1" />
<polygon points="46.0,128.0 63.2,122.8 83.9,161.4 70.0,171.0" fill="none" stroke="#ec5a30" stroke-width="1.1" />
<polygon points="63.2,122.8 82.1,118.9 98.2,152.9 83.9,161.4" fill="none" stroke="#ec5a30" stroke-width="1.1" />
<polygon points="82.1,118.9 100.0,116.0 114.0,144.0 98.2,152.9" fill="none" stroke="#ec5a30" stroke-width="1.1" />
<polygon points="117.0,71.0 134.0,65.0 143.8,88.8 126.0,99.0" fill="none" stroke="#ec5a30" stroke-width="1.1" />
<polygon points="126.0,99.0 143.8,88.8 152.0,120.5 134.5,129.5" fill="none" stroke="#ec5a30" stroke-width="1.1" />
<polygon points="134.0,65.0 148.0,60.0 156.5,85.0 143.8,88.8" fill="none" stroke="#ec5a30" stroke-width="1.1" />
<polygon points="148.0,60.0 164.5,53.0 173.0,78.0 156.5,85.0" fill="none" stroke="#ec5a30" stroke-width="1.1" />
<polygon points="164.5,53.0 184.0,46.0 192.0,72.5 173.0,78.0" fill="none" stroke="#ec5a30" stroke-width="1.1" />
<polygon points="184.0,46.0 204.5,46.0 211.4,64.0 192.0,72.5" fill="none" stroke="#ec5a30" stroke-width="1.1" />
<polygon points="204.5,46.0 234.8,46.0 240.0,56.0 211.4,64.0" fill="none" stroke="#ec5a30" stroke-width="1.1" />
<polygon points="234.8,46.0 276.0,46.0 254.0,51.5 240.0,56.0" fill="none" stroke="#ec5a30" stroke-width="1.1" />
<polygon points="143.8,88.8 156.5,85.0 167.0,112.0 152.0,120.5" fill="none" stroke="#ec5a30" stroke-width="1.1" />
<polygon points="156.5,85.0 173.0,78.0 183.0,106.0 167.0,112.0" fill="none" stroke="#ec5a30" stroke-width="1.1" />
<polygon points="173.0,78.0 197.6,69.4 206.0,99.0 183.8,106.0" fill="none" stroke="#ec5a30" stroke-width="1.1" />
<polygon points="197.6,69.4 215.5,64.0 223.8,95.0 206.0,99.0" fill="none" stroke="#ec5a30" stroke-width="1.1" />
<polygon points="215.5,64.0 240.0,56.0 243.0,91.5 223.8,95.0" fill="none" stroke="#ec5a30" stroke-width="1.1" />
<polygon points="240.0,56.0 254.0,51.5 261.0,88.8 243.0,91.5" fill="none" stroke="#ec5a30" stroke-width="1.1" />
<polygon points="254.0,51.5 276.0,46.0 280.0,86.0 261.0,88.8" fill="none" stroke="#ec5a30" stroke-width="1.1" />
<polygon points="280.0,53.0 291.0,52.0 292.4,74.7 280.0,75.5" fill="none" stroke="#ec5a30" stroke-width="1.1" />
<polygon points="292.4,55.3 308.7,54.5 311.0,71.6 293.0,74.7" fill="none" stroke="#ec5a30" stroke-width="1.1" />
<polygon points="280.0,75.5 311.0,72.0 311.0,80.0 281.6,84.0" fill="none" stroke="#ec5a30" stroke-width="1.1" />
<polygon points="309.5,46.0 325.0,46.0 329.7,77.0 315.0,79.4" fill="none" stroke="#ec5a30" stroke-width="1.1" />
<polygon points="345.0,46.0 370.0,46.0 373.0,66.2 349.8,69.3" fill="none" stroke="#ec5a30" stroke-width="1.1" />
<polygon points="370.0,46.0 394.8,46.0 407.3,61.5 373.0,66.2" fill="none" stroke="#ec5a30" stroke-width="1.1" />
<polygon points="416.6,46.0 430.0,46.0 431.0,57.0 418.0,59.2" fill="none" stroke="#ec5a30" stroke-width="1.1" />
<polygon points="430.0,46.0 453.8,46.0 452.3,53.0 431.0,57.0" fill="none" stroke="#ec5a30" stroke-width="1.1" />
<polygon points="505.0,46.0 535.0,46.0 537.0,54.0 512.8,62.6" fill="none" stroke="#ec5a30" stroke-width="1.1" />
<polygon points="18.0,224.0 34.8,214.7 46.2,239.2 30.0,248.0" fill="none" stroke="#ec5a30" stroke-width="1.1" />
<polygon points="34.8,214.7 50.8,205.4 61.5,231.2 46.2,239.2" fill="none" stroke="#ec5a30" stroke-width="1.1" />
<polygon points="50.8,205.4 64.4,196.7 77.4,222.2 61.5,231.2" fill="none" stroke="#ec5a30" stroke-width="1.1" />
<polygon points="64.4,196.7 81.9,186.6 93.5,213.0 77.4,222.2" fill="none" stroke="#ec5a30" stroke-width="1.1" />
<polygon points="81.9,186.6 96.0,177.6 109.8,203.9 93.5,213.0" fill="none" stroke="#ec5a30" stroke-width="1.1" />
<polygon points="96.0,177.6 113.9,169.4 127.7,196.5 109.8,203.9" fill="none" stroke="#ec5a30" stroke-width="1.1" />
<polygon points="113.9,169.4 127.7,159.0 142.2,188.0 127.7,196.5" fill="none" stroke="#ec5a30" stroke-width="1.1" />
<polygon points="127.7,159.0 143.4,149.3 158.1,178.1 142.2,188.0" fill="none" stroke="#ec5a30" stroke-width="1.1" />
<polygon points="143.4,149.3 160.9,140.4 175.8,170.0 158.1,178.1" fill="none" stroke="#ec5a30" stroke-width="1.1" />
<polygon points="160.9,140.4 176.0,132.0 191.0,161.0 175.8,170.0" fill="none" stroke="#ec5a30" stroke-width="1.1" />
<polygon points="0.0,264.0 18.4,255.6 15.9,288.1 0.0,297.0" fill="none" stroke="#ec5a30" stroke-width="1.1" />
<polygon points="18.4,255.6 34.7,246.2 32.7,278.2 15.9,288.1" fill="none" stroke="#ec5a30" stroke-width="1.1" />
<polygon points="53.2,236.4 70.1,226.6 68.1,258.8 50.7,267.7" fill="none" stroke="#ec5a30" stroke-width="1.1" />
<polygon points="70.1,226.6 87.5,217.9 84.8,250.3 68.1,258.8" fill="none" stroke="#ec5a30" stroke-width="1.1" />
<polygon points="87.5,217.9 103.7,208.7 100.9,238.6 84.8,250.3" fill="none" stroke="#ec5a30" stroke-width="1.1" />
<polygon points="103.7,208.7 123.4,200.0 117.9,230.6 100.9,238.6" fill="none" stroke="#ec5a30" stroke-width="1.1" />
<polygon points="123.4,200.0 140.2,189.6 134.6,219.8 117.9,230.6" fill="none" stroke="#ec5a30" stroke-width="1.1" />
<polygon points="140.2,189.6 157.7,180.7 153.2,211.5 134.6,219.8" fill="none" stroke="#ec5a30" stroke-width="1.1" />
<polygon points="157.7,180.7 174.4,172.1 169.0,202.5 153.2,211.5" fill="none" stroke="#ec5a30" stroke-width="1.1" />
<polygon points="174.4,172.1 192.0,162.0 186.0,192.0 169.0,202.5" fill="none" stroke="#ec5a30" stroke-width="1.1" />
<polygon points="0.0,231.5 18.0,224.0 30.0,248.0 0.0,262.0" fill="none" stroke="#ec5a30" stroke-width="1.1" />
<polygon points="52.0,283.0 70.1,272.2 82.7,298.3 66.0,308.0" fill="none" stroke="#ec5a30" stroke-width="1.1" />
<polygon points="70.1,272.2 87.4,262.7 100.2,289.0 82.7,298.3" fill="none" stroke="#ec5a30" stroke-width="1.1" />
<polygon points="87.4,262.7 103.6,254.4 118.3,278.7 100.2,289.0" fill="none" stroke="#ec5a30" stroke-width="1.1" />
<polygon points="120.5,243.0 138.7,234.6 152.2,258.8 136.2,269.0" fill="none" stroke="#ec5a30" stroke-width="1.1" />
<polygon points="138.7,234.6 156.8,224.8 170.8,250.3 152.2,258.8" fill="none" stroke="#ec5a30" stroke-width="1.1" />
<polygon points="156.8,224.8 174.4,214.5 186.6,240.4 170.8,250.3" fill="none" stroke="#ec5a30" stroke-width="1.1" />
<polygon points="121.3,279.6 139.7,267.0 153.7,287.5 133.7,297.8" fill="none" stroke="#ec5a30" stroke-width="1.1" />
<polygon points="161.6,255.5 181.8,243.3 190.6,267.5 171.7,276.2" fill="none" stroke="#ec5a30" stroke-width="1.1" />
<polygon points="181.8,243.3 200.6,231.6 211.3,257.4 190.6,267.5" fill="none" stroke="#ec5a30" stroke-width="1.1" />
<polygon points="200.6,231.6 222.0,221.0 229.0,246.0 211.3,257.4" fill="none" stroke="#ec5a30" stroke-width="1.1" />
<polygon points="125.0,307.0 150.0,293.0 160.0,311.0 130.0,311.0" fill="none" stroke="#ec5a30" stroke-width="1.1" />
<polygon points="150.0,293.0 175.0,279.0 188.0,300.0 160.0,311.0" fill="none" stroke="#ec5a30" stroke-width="1.1" />
<polygon points="175.0,279.0 200.0,266.0 210.0,281.0 188.0,300.0" fill="none" stroke="#ec5a30" stroke-width="1.1" />
<polygon points="200.0,266.0 226.0,252.0 230.0,262.0 210.0,281.0" fill="none" stroke="#ec5a30" stroke-width="1.1" />
<polygon points="214.0,262.0 232.0,256.0 250.0,272.0 230.0,290.0" fill="none" stroke="#ec5a30" stroke-width="1.1" />
<polygon points="200.0,303.0 230.0,290.0 250.0,272.0 262.0,300.0 248.0,311.0 205.0,311.0" fill="none" stroke="#ec5a30" stroke-width="1.1" />
<polygon points="194.8,128.3 268.0,120.0 273.4,138.0 274.8,153.0 211.4,168.3" fill="none" stroke="#ec5a30" stroke-width="1.1" />
<polygon points="211.4,168.3 274.8,153.0 284.5,198.6 283.0,205.5 225.6,242.8 216.0,200.0" fill="none" stroke="#ec5a30" stroke-width="1.1" />
<polygon points="268.0,120.0 290.0,117.0 292.0,158.0 279.0,160.0 273.4,138.0" fill="none" stroke="#ec5a30" stroke-width="1.1" />
<polygon points="280.0,97.0 286.0,97.0 294.0,157.0 283.0,160.0" fill="none" stroke="#ec5a30" stroke-width="1.1" />
<polygon points="286.0,97.0 297.0,96.0 303.0,150.0 294.0,157.0" fill="none" stroke="#ec5a30" stroke-width="1.1" />
<polygon points="297.0,96.0 309.5,94.0 314.0,135.0 303.0,150.0" fill="none" stroke="#ec5a30" stroke-width="1.1" />
<polygon points="309.5,94.0 324.0,96.0 326.5,120.5 314.0,135.0" fill="none" stroke="#ec5a30" stroke-width="1.1" />
<polygon points="335.9,126.7 349.0,125.9 349.8,120.5 360.7,118.9 360.7,114.3 369.2,112.7 372.3,141.0 336.6,144.8" fill="none" stroke="#ec5a30" stroke-width="1.1" />
<polygon points="311.0,149.0 372.0,141.0 375.9,158.8 315.0,167.3" fill="none" stroke="#ec5a30" stroke-width="1.1" />
<polygon points="315.0,167.3 375.9,158.8 378.5,176.4 319.8,184.8" fill="none" stroke="#ec5a30" stroke-width="1.1" />
<polygon points="319.8,184.8 378.5,176.4 382.0,192.7 322.8,201.7" fill="none" stroke="#ec5a30" stroke-width="1.1" />
<polygon points="322.8,201.7 382.0,192.7 385.5,210.6 327.4,219.9" fill="none" stroke="#ec5a30" stroke-width="1.1" />
<polygon points="327.4,219.9 385.5,210.6 388.4,228.8 332.5,237.6" fill="none" stroke="#ec5a30" stroke-width="1.1" />
<polygon points="332.5,237.6 388.4,228.8 392.0,246.0 336.0,255.0" fill="none" stroke="#ec5a30" stroke-width="1.1" />
<polygon points="306.3,257.0 330.9,251.4 333.5,261.8 307.7,268.3" fill="none" stroke="#ec5a30" stroke-width="1.1" />
<polygon points="307.7,268.3 333.5,261.8 336.4,273.6 311.0,279.0" fill="none" stroke="#ec5a30" stroke-width="1.1" />
<polygon points="311.0,279.0 344.3,271.2 395.0,263.3 396.6,277.6 347.5,287.0 327.0,291.0" fill="none" stroke="#ec5a30" stroke-width="1.1" />
<polygon points="354.6,287.0 396.6,277.6 401.3,300.5 363.3,306.0" fill="none" stroke="#ec5a30" stroke-width="1.1" />
<polygon points="372.0,305.3 401.3,300.5 402.9,311.0 372.8,311.0" fill="none" stroke="#ec5a30" stroke-width="1.1" />
<polygon points="230.0,243.0 263.4,226.2 269.5,240.5 255.9,259.4" fill="none" stroke="#ec5a30" stroke-width="1.1" />
<polygon points="234.7,247.3 255.9,259.4 249.8,270.0 234.7,258.0" fill="none" stroke="#ec5a30" stroke-width="1.1" />
<polygon points="262.0,262.0 290.0,248.0 306.0,270.0 285.0,284.0" fill="none" stroke="#ec5a30" stroke-width="1.1" />
<polygon points="270.0,290.0 300.0,275.0 308.0,300.0 285.0,311.0 272.0,311.0" fill="none" stroke="#ec5a30" stroke-width="1.1" />
<polygon points="390.2,86.3 439.8,73.9 441.4,87.1 391.7,96.4" fill="none" stroke="#ec5a30" stroke-width="1.1" />
<polygon points="391.7,96.4 439.8,87.9 439.0,101.0 394.0,110.4" fill="none" stroke="#ec5a30" stroke-width="1.1" />
<polygon points="394.0,110.4 455.4,98.8 457.7,113.5 395.6,122.0" fill="none" stroke="#ec5a30" stroke-width="1.1" />
<polygon points="395.6,122.0 438.0,118.0 440.6,141.0 400.3,149.5" fill="none" stroke="#ec5a30" stroke-width="1.1" />
<polygon points="400.3,149.5 460.0,137.8 460.0,152.6 402.6,166.6" fill="none" stroke="#ec5a30" stroke-width="1.1" />
<polygon points="402.6,166.6 460.0,152.6 460.0,172.8 405.0,182.0" fill="none" stroke="#ec5a30" stroke-width="1.1" />
<polygon points="405.0,182.0 460.0,172.8 462.0,188.0 407.2,196.0" fill="none" stroke="#ec5a30" stroke-width="1.1" />
<polygon points="407.2,196.0 462.0,188.0 465.2,202.4 409.8,211.5" fill="none" stroke="#ec5a30" stroke-width="1.1" />
<polygon points="409.8,211.5 465.2,202.4 468.1,217.5 410.8,226.3" fill="none" stroke="#ec5a30" stroke-width="1.1" />
<polygon points="410.8,226.3 468.1,217.5 470.5,231.6 413.3,241.4" fill="none" stroke="#ec5a30" stroke-width="1.1" />
<polygon points="413.3,241.4 470.5,231.6 474.6,245.9 415.8,256.7" fill="none" stroke="#ec5a30" stroke-width="1.1" />
<polygon points="415.8,256.7 474.6,245.9 476.9,261.5 416.3,270.6" fill="none" stroke="#ec5a30" stroke-width="1.1" />
<polygon points="416.3,270.6 476.9,261.5 480.0,276.0 419.0,286.0" fill="none" stroke="#ec5a30" stroke-width="1.1" />
<polygon points="420.3,286.3 462.3,281.5 464.6,295.0 422.7,304.5" fill="none" stroke="#ec5a30" stroke-width="1.1" />
<polygon points="422.7,304.5 480.0,293.4 482.0,311.0 423.0,311.0" fill="none" stroke="#ec5a30" stroke-width="1.1" />
<polyline points="0.0,222.0 88.0,172.5 190.0,111.0 282.0,93.2 349.0,78.4 370.0,80.7 455.0,63.7" fill="none" stroke="#ec5a30" stroke-width="0.9" stroke-linejoin="round" stroke-linecap="round" />
<polyline points="0.0,219.2 88.0,169.7 190.0,108.2 282.0,90.4 349.0,75.6 370.0,77.9 455.0,60.9 511.0,52.0" fill="none" stroke="#ec5a30" stroke-width="0.9" stroke-linejoin="round" stroke-linecap="round" />
<polyline points="455.0,66.0 511.0,57.0 535.0,53.0" fill="none" stroke="#ec5a30" stroke-width="0.9" stroke-linejoin="round" stroke-linecap="round" />
<polyline points="373.0,84.8 381.0,136.0 395.0,200.0 410.8,311.0" fill="none" stroke="#ec5a30" stroke-width="1" stroke-linejoin="round" stroke-linecap="round" />
<polyline points="379.0,84.8 387.0,136.0 398.0,200.0 415.6,311.0" fill="none" stroke="#ec5a30" stroke-width="1" stroke-linejoin="round" stroke-linecap="round" />
<polygon points="461.0,100.2 546.5,83.8 550.5,102.6 462.0,117.0" fill="none" stroke="#ec5a30" stroke-width="1.1" />
<polygon points="481.2,88.5 502.8,84.2 503.8,89.1 482.2,93.4" fill="#dac8bf" stroke="#c6b2a8" stroke-width="0.7" />
<polygon points="540.8,89.0 555.7,86.7 557.2,96.6 542.3,98.9" fill="#dac8bf" stroke="#c6b2a8" stroke-width="0.7" />
<polyline points="486.0,165.0 478.0,116.0 535.0,101.5 545.0,102.0" fill="none" stroke="#f8e9e7" stroke-width="5.5" stroke-linejoin="round" stroke-linecap="round" />
<polygon points="482.0,119.0 497.0,117.5 501.8,144.2 494.0,145.0 492.4,136.3 487.0,137.0" fill="#dac8bf" stroke="#c6b2a8" stroke-width="0.7" />
<polygon points="487.1,148.9 497.0,147.4 498.5,157.3 488.6,158.8" fill="#dac8bf" stroke="#c6b2a8" stroke-width="0.7" />
<polyline points="573.0,64.0 592.0,148.0 603.0,202.0 613.0,253.4 564.9,262.6 566.0,282.0 539.6,283.2 536.1,267.2 484.5,275.2" fill="none" stroke="#ec5a30" stroke-width="1.1" stroke-linejoin="round" stroke-linecap="round" />
<polygon points="522.0,108.0 538.0,106.5 544.0,145.0 530.0,147.3" fill="#cab8c2" stroke="#b9a6b2" stroke-width="0.7" />
<polygon points="471.1,179.2 483.1,178.0 486.9,215.8 474.9,217.0" fill="#dac8bf" stroke="#c6b2a8" stroke-width="0.7" />
<polygon points="488.3,222.6 513.8,217.4 517.7,237.0 492.2,242.2" fill="#dac8bf" stroke="#c6b2a8" stroke-width="0.7" />
<polygon points="527.6,240.1 547.2,236.1 549.2,245.9 529.6,249.9" fill="#dac8bf" stroke="#c6b2a8" stroke-width="0.7" />
<polygon points="577.3,166.7 589.3,166.1 590.3,186.1 578.3,186.7" fill="#dac8bf" stroke="#c6b2a8" stroke-width="0.7" />
<polygon points="536.0,181.1 546.9,180.0 547.6,186.9 536.7,188.0" fill="#dac8bf" stroke="#c6b2a8" stroke-width="0.7" />
<polygon points="478.3,222.6 483.2,222.1 484.9,239.0 480.0,239.5" fill="#dac8bf" stroke="#c6b2a8" stroke-width="0.7" />
<polygon points="483.8,243.5 488.7,242.7 490.8,256.5 485.9,257.3" fill="#dac8bf" stroke="#c6b2a8" stroke-width="0.7" />
<polygon points="506.0,271.8 512.0,271.8 512.0,275.2 506.0,275.2" fill="#dac8bf" stroke="#c6b2a8" stroke-width="0.7" />
<polygon points="505.0,285.4 511.0,285.4 511.0,291.4 505.0,291.4" fill="#dac8bf" stroke="#c6b2a8" stroke-width="0.7" />
<polygon points="500.0,305.5 511.0,305.5 511.0,311.5 500.0,311.5" fill="#dac8bf" stroke="#c6b2a8" stroke-width="0.7" />
<polygon points="512.0,109.7 550.5,103.4 560.5,154.4 590.5,149.0 602.8,201.7 570.6,206.3 579.8,251.0 482.2,267.2 469.5,166.1 517.5,158.3" fill="rgba(168,128,232,0.3)" stroke="none" stroke-width="1" />
<polyline points="486.8,166.0 493.6,208.6 546.5,202.8 555.7,209.7 560.3,219.0 559.0,253.0" fill="none" stroke="#e2d6ec" stroke-width="5" stroke-linejoin="round" stroke-linecap="round" />
<polyline points="486.8,166.0 546.5,159.0" fill="none" stroke="#e2d6ec" stroke-width="5" stroke-linejoin="round" stroke-linecap="round" />
<polyline points="546.5,159.0 551.0,180.0 562.6,188.0 563.7,207.4 560.3,253.4" fill="none" stroke="#e2d6ec" stroke-width="5" stroke-linejoin="round" stroke-linecap="round" />
<polyline points="541.0,106.0 549.0,160.0" fill="none" stroke="#e2d6ec" stroke-width="5" stroke-linejoin="round" stroke-linecap="round" />
<polyline points="560.3,253.4 559.0,270.0 556.0,311.0" fill="none" stroke="#f5ecec" stroke-width="4" stroke-linejoin="round" stroke-linecap="round" />
<polygon points="512.0,109.7 550.5,103.4 560.5,154.4 590.5,149.0 602.8,201.7 570.6,206.3 579.8,251.0 482.2,267.2 469.5,166.1 517.5,158.3" fill="none" stroke="#0000f5" stroke-width="2.4" stroke-linejoin="miter"/>
<polyline points="0.0,224.5 88.0,175.0 190.0,113.5 282.0,95.7 348.3,80.9 370.0,83.2 455.4,66.2" fill="none" stroke="#db2f28" stroke-width="2.6" stroke-linejoin="round" stroke-linecap="round" />
<polyline points="280.0,46.0 277.6,60.4 282.0,96.0" fill="none" stroke="#db2f28" stroke-width="2.6" stroke-linejoin="round" stroke-linecap="round" />
<polyline points="189.3,113.5 204.5,154.5 192.8,160.7 211.4,210.0 228.6,254.9 233.2,265.5 177.2,311.0" fill="none" stroke="#db2f28" stroke-width="2.6" stroke-linejoin="round" stroke-linecap="round" />
<polyline points="283.0,311.0 299.0,288.2 352.0,311.0" fill="none" stroke="#db2f28" stroke-width="2.6" stroke-linejoin="round" stroke-linecap="round" />
<polyline points="455.4,66.2 459.4,87.7 467.3,160.0 482.2,267.2 484.5,275.2 496.0,290.0 499.4,311.0" fill="none" stroke="#db2f28" stroke-width="2.6" stroke-linejoin="round" stroke-linecap="round" />
<polyline points="459.4,87.7 572.4,64.1 700.0,47.0" fill="none" stroke="#db2f28" stroke-width="2.6" stroke-linejoin="round" stroke-linecap="round" />
<polyline points="0.0,60.0 6.4,51.0 10.3,51.0 20.5,46.0" fill="none" stroke="#db2f28" stroke-width="2.6" stroke-linejoin="round" stroke-linecap="round" />
<polyline points="0.0,52.0 4.0,48.0" fill="none" stroke="#9fd3e6" stroke-width="1.5" stroke-linejoin="round" stroke-linecap="round" />
<polyline points="697.0,46.0 704.0,220.0 706.6,278.4 712.5,285.0" fill="none" stroke="#a3d5e8" stroke-width="1.6" stroke-linejoin="round" stroke-linecap="round" />
<polyline points="700.6,46.0 708.8,220.0 713.4,290.0 734.0,311.0" fill="none" stroke="#db2f28" stroke-width="2.2" stroke-linejoin="round" stroke-linecap="round" />
<polyline points="702.6,46.0 710.8,220.0 715.4,289.3 736.0,311.0" fill="none" stroke="#f2b54a" stroke-width="1.2" stroke-linejoin="round" stroke-linecap="round" />
<polyline points="704.0,46.0 712.2,220.0 716.8,288.6 737.6,311.0" fill="none" stroke="#ec6a35" stroke-width="1" stroke-linejoin="round" stroke-linecap="round" />
<polyline points="102.7,46.0 116.9,136.0 127.0,205.0 142.0,311.0" fill="none" stroke="#8d8d8d" stroke-width="0.7" stroke-linejoin="round" stroke-linecap="round" />
<polygon points="131.8,247.0 135.8,247.0 135.8,251.0 131.8,251.0" fill="#8d8d8d" stroke="none" stroke-width="1" />
<polyline points="569.0,46.0 718.0,248.6 766.4,311.0" fill="none" stroke="#8d8d8d" stroke-width="0.7" stroke-linejoin="round" stroke-linecap="round" />
<polyline points="578.0,311.0 709.0,249.2" fill="none" stroke="#8d8d8d" stroke-width="0.7" stroke-linejoin="round" stroke-linecap="round" />
<polygon points="645.0,149.0 648.0,147.0 650.0,151.0 647.0,153.0" fill="#9a9a9a" stroke="none" stroke-width="1" />
<polygon points="626.0,287.0 629.0,285.0 631.0,290.0 628.0,291.0" fill="#9a9a9a" stroke="none" stroke-width="1" />
<polygon points="714.0,243.0 718.0,243.0 718.0,247.0 714.0,247.0" fill="#d8d4ce" stroke="#999" stroke-width="0.6" />
<polygon points="716.0,246.5 721.0,246.5 721.0,251.5 716.0,251.5" fill="#c8c4be" stroke="#888" stroke-width="0.6" />
<polyline points="812.0,216.0 795.0,234.0 789.3,243.6 797.0,255.0 823.5,264.5 842.5,279.7 853.8,295.0 869.0,311.0" fill="none" stroke="#e3d68c" stroke-width="7.5" stroke-linejoin="round" stroke-linecap="round" />
<polyline points="884.0,311.0 887.0,290.0 891.8,275.9 903.0,269.3 914.6,272.0 937.3,285.4 946.8,300.6 948.7,311.0" fill="none" stroke="#e3d68c" stroke-width="7.5" stroke-linejoin="round" stroke-linecap="round" />
<polyline points="812.0,216.0 795.0,234.0 789.3,243.6 797.0,255.0 823.5,264.5 842.5,279.7 853.8,295.0 869.0,311.0" fill="none" stroke="#f6efc8" stroke-width="6.3" stroke-linejoin="round" stroke-linecap="round" />
<polyline points="884.0,311.0 887.0,290.0 891.8,275.9 903.0,269.3 914.6,272.0 937.3,285.4 946.8,300.6 948.7,311.0" fill="none" stroke="#f6efc8" stroke-width="6.3" stroke-linejoin="round" stroke-linecap="round" />
<polyline points="812.0,216.0 795.0,234.0 789.3,243.6 797.0,255.0 823.5,264.5 842.5,279.7 853.8,295.0 869.0,311.0" fill="none" stroke="#eeebe3" stroke-width="5" stroke-linejoin="round" stroke-linecap="round" />
<polyline points="884.0,311.0 887.0,290.0 891.8,275.9 903.0,269.3 914.6,272.0 937.3,285.4 946.8,300.6 948.7,311.0" fill="none" stroke="#eeebe3" stroke-width="5" stroke-linejoin="round" stroke-linecap="round" />
<polyline points="812.0,222.0 795.0,228.0 787.4,233.2 779.8,245.5 780.8,257.0 797.0,266.4 819.7,279.7 834.9,293.0 846.3,308.0 848.0,311.0" fill="none" stroke="#c2dcc0" stroke-width="5.5" stroke-linejoin="round" stroke-linecap="round" />
<polyline points="880.0,311.0 884.2,306.0 895.6,293.0 905.0,290.0 924.0,298.7 933.5,306.3 938.0,311.0" fill="none" stroke="#c2dcc0" stroke-width="5.5" stroke-linejoin="round" stroke-linecap="round" />
<polyline points="806.0,216.0 806.0,229.0 795.0,232.0" fill="none" stroke="#a9d3e3" stroke-width="4" stroke-linejoin="round" stroke-linecap="round" />
<polyline points="1006.0,311.0 1123.0,268.0 1160.0,256.0" fill="none" stroke="#e24a28" stroke-width="1.8" stroke-linejoin="round" stroke-linecap="round" />
<polyline points="1091.0,256.0 1091.0,311.0" fill="none" stroke="#c6dfc8" stroke-width="0.8" stroke-linejoin="round" stroke-linecap="round" />
<text x="128" y="147" transform="rotate(-20.5 128 147)" font-family="Liberation Sans" font-size="9.8" fill="#222" stroke="#fff" stroke-width="2.2" stroke-opacity="0.55" paint-order="stroke" textLength="128" lengthAdjust="spacingAndGlyphs">1-я линия Леспромхоза улица</text>
<text x="42" y="283" transform="rotate(-29.5 42 283)" font-family="Liberation Sans" font-size="10" fill="#222" stroke="#fff" stroke-width="2.2" stroke-opacity="0.55" paint-order="stroke">2-я линия</text>
<text x="91" y="254" transform="rotate(-29.5 91 254)" font-family="Liberation Sans" font-size="10" fill="#222" stroke="#fff" stroke-width="2.2" stroke-opacity="0.55" paint-order="stroke">Леспромхоза улица</text>
<text x="117" y="309" transform="rotate(-29 117 309)" font-family="Liberation Sans" font-size="10" fill="#222" stroke="#fff" stroke-width="2.2" stroke-opacity="0.55" paint-order="stroke">Леспромхоза улица</text>
<text x="234" y="311" transform="rotate(-57 234 311)" font-family="Liberation Sans" font-size="10" fill="#222" stroke="#fff" stroke-width="2.2" stroke-opacity="0.55" paint-order="stroke">заторов</text>
<text x="389" y="178" transform="rotate(79 389 178)" font-family="Liberation Sans" font-size="9.8" fill="#222" stroke="#fff" stroke-width="2.2" stroke-opacity="0.55" paint-order="stroke" textLength="88" lengthAdjust="spacingAndGlyphs">Пригородная улица</text>
<text x="153" y="55" transform="rotate(-10 153 55)" font-family="Liberation Sans" font-size="10" fill="#222" stroke="#fff" stroke-width="2.2" stroke-opacity="0.55" paint-order="stroke">улица</text>
<text x="34.7" y="103.8" font-family="Liberation Sans" font-size="16.2" fill="#fff" stroke="#fff6f4" stroke-width="5" stroke-opacity="0.75" stroke-linejoin="round" textLength="112" lengthAdjust="spacingAndGlyphs">33:18:000610</text>
<text x="34.7" y="103.8" font-family="Liberation Sans" font-size="16.2" fill="#a4121b" stroke="#a4121b" stroke-width="0.2" textLength="112" lengthAdjust="spacingAndGlyphs">33:18:000610</text>
<text x="48.4" y="267.8" font-family="Liberation Sans" font-size="16.2" fill="#fff" stroke="#fff6f4" stroke-width="5" stroke-opacity="0.75" stroke-linejoin="round" textLength="112" lengthAdjust="spacingAndGlyphs">33:18:000611</text>
<text x="48.4" y="267.8" font-family="Liberation Sans" font-size="16.2" fill="#a4121b" stroke="#a4121b" stroke-width="0.2" textLength="112" lengthAdjust="spacingAndGlyphs">33:18:000611</text>
<text x="274" y="237.2" font-family="Liberation Sans" font-size="16.2" fill="#fff" stroke="#fff6f4" stroke-width="5" stroke-opacity="0.75" stroke-linejoin="round" textLength="112" lengthAdjust="spacingAndGlyphs">33:18:000702</text>
<text x="274" y="237.2" font-family="Liberation Sans" font-size="16.2" fill="#a4121b" stroke="#a4121b" stroke-width="0.2" textLength="112" lengthAdjust="spacingAndGlyphs">33:18:000702</text>
<text x="494" y="174.1" font-family="Liberation Sans" font-style="italic" font-size="12.5" fill="#583a6a" stroke="#583a6a" stroke-width="0.25" textLength="77" lengthAdjust="spacingAndGlyphs">Сельхозхимия</text>
<!-- /MAP -->
</svg>
</div>
<div id="zoom">
  <div style="position:absolute;left:13px;top:23.5px;width:18px;height:3.6px;background:#fff"></div>
  <div style="position:absolute;left:20.3px;top:17px;width:3.6px;height:17px;background:#fff"></div>
  <div style="position:absolute;left:14px;top:68.6px;width:17px;height:3.6px;background:#fff"></div>
</div>
<div id="popup">
  <div class="pt" style="top:20px">Найдено объектов: 2</div>
  <div class="pt pb" style="top:47px">Единицы кадастрового деления:</div>
  <div class="pt" style="top:77px">Кадастровые округа: 1</div>
  <div class="btn" style="top:72px">Посмотреть</div>
  <div class="pt pb" style="top:114px">Земельные участки из ЕГРН:</div>
  <div class="pt" style="top:145px">Земельные участки из</div>
  <div class="pt" style="top:170px">ЕГРН: 1</div>
  <div class="btn" style="top:152px">Посмотреть</div>
</div>
<div id="info">
  <div id="etitle">Земельный участок из ЕГРН</div>
  <div id="divl"></div>
  <div class="l" style="left:13px;top:57.8px">Вид земельного участка</div>
  <div class="v" style="left:260px;top:57.8px">Землепользование</div>
  <div class="l" style="left:508px;top:57.8px">Дата присвоения</div>
  <div class="v" style="left:754px;top:57.8px">15.04.2005</div>

  <div class="l" style="left:13px;top:94.9px">Кадастровый номер</div>
  <div class="v" style="left:260px;top:94.9px">33:18:000703:20</div>
  <div class="l" style="left:508px;top:94.9px">Кадастровый квартал</div>
  <div class="v" style="left:754px;top:94.9px">33:18:000703</div>

  <div class="l" style="left:13px;top:132.4px">Адрес</div>
  <div class="v" style="left:260px;top:132.4px">обл. Владимирская, р-н<br>Кольчугинский, г.<br>Кольчугино, п. Белая Речка,<br>ул. Мелиораторов, дом № 9В</div>
  <div class="l" style="left:508px;top:132.4px">Площадь уточненная</div>
  <div class="v" style="left:754px;top:132.4px">23 643</div>

  <div class="l" style="left:13px;top:238px">Статус</div>
  <div class="v" style="left:260px;top:238px">Ранее учтенный</div>
  <div class="l" style="left:508px;top:238px">Категория земель</div>
  <div class="v" style="left:754px;top:238px">Земли населенных пунктов</div>

  <div class="l" style="left:13px;top:275px">Вид разрешенного<br>использования</div>
  <div class="v" style="left:260px;top:275px">Для производственных целей</div>
  <div class="l" style="left:508px;top:275px">Форма собственности</div>
  <div class="v" style="left:754px;top:275px">—</div>

  <div class="l" style="left:13px;top:334.3px">Кадастровая стоимость</div>
  <div class="v" style="left:260px;top:334.3px">11 787 693,840</div>
  <div class="l" style="left:508px;top:334.3px">Удельный показатель<br>кадастровой стоимости</div>
  <div class="v" style="left:754px;top:334.3px">498,570</div>
</div>
</body></html>
